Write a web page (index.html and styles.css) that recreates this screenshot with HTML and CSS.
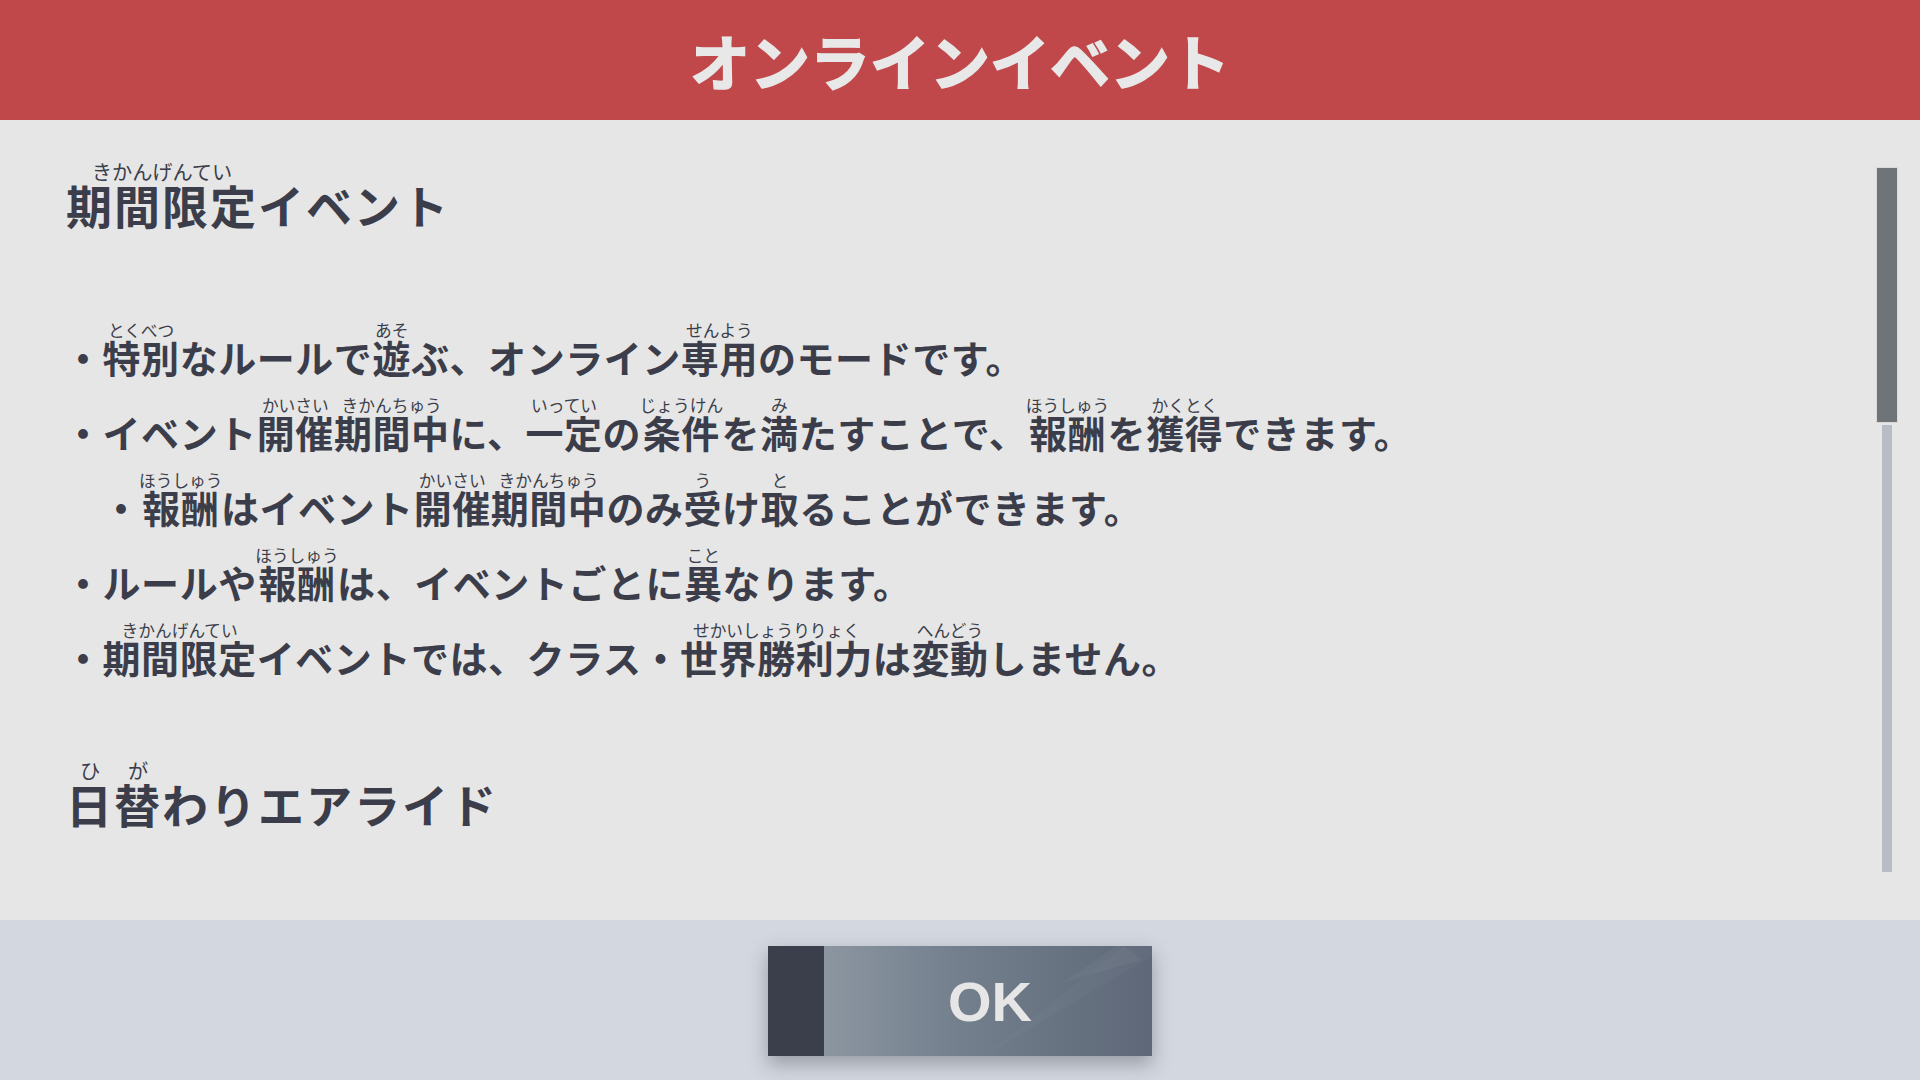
FILE: index.html
```html
<!DOCTYPE html>
<html lang="ja">
<head>
    <meta charset="UTF-8">
    <meta name="viewport" content="width=device-width, initial-scale=1.0">
    <title>オンラインイベント</title>
    <link rel="stylesheet" href="styles.css">
</head>
<body>

    <header class="title-bar">
        <h1>オンラインイベント</h1>
    </header>

    <main class="panel">
        <div class="content">
            <h2 class="section-title"><ruby>期間限定<rt>きかんげんてい</rt></ruby>イベント</h2>

            <ul class="notes">
                <li>・<ruby>特別<rt>とくべつ</rt></ruby>なルールで<ruby>遊<rt>あそ</rt></ruby>ぶ、オンライン<ruby>専用<rt>せんよう</rt></ruby>のモードです。</li>
                <li>・イベント<ruby>開催<rt>かいさい</rt></ruby><ruby>期間中<rt>きかんちゅう</rt></ruby>に、<ruby>一定<rt>いってい</rt></ruby>の<ruby>条件<rt>じょうけん</rt></ruby>を<ruby>満<rt>み</rt></ruby>たすことで、<ruby>報酬<rt>ほうしゅう</rt></ruby>を<ruby>獲得<rt>かくとく</rt></ruby>できます。</li>
                <li class="sub">・<ruby>報酬<rt>ほうしゅう</rt></ruby>はイベント<ruby>開催<rt>かいさい</rt></ruby><ruby>期間中<rt>きかんちゅう</rt></ruby>のみ<ruby>受<rt>う</rt></ruby>け<ruby>取<rt>と</rt></ruby>ることができます。</li>
                <li>・ルールや<ruby>報酬<rt>ほうしゅう</rt></ruby>は、イベントごとに<ruby>異<rt>こと</rt></ruby>なります。</li>
                <li>・<ruby>期間限定<rt>きかんげんてい</rt></ruby>イベントでは、クラス・<ruby>世界勝利力<rt>せかいしょうりりょく</rt></ruby>は<ruby>変動<rt>へんどう</rt></ruby>しません。</li>
            </ul>

            <h2 class="section-title"><ruby>日<rt>ひ</rt></ruby><ruby>替<rt>が</rt></ruby>わりエアライド</h2>
        </div>

        <!-- スクロールバー -->
        <div class="scrollbar">
            <div class="thumb"></div>
            <div class="track"></div>
        </div>
    </main>

    <footer class="footer">
        <button class="ok-btn">
            <span class="ok-edge"></span>
            <span class="ok-label">OK</span>
            <svg class="ok-shine" width="328" height="110" viewBox="0 0 328 110">
                <polygon points="160,110 328,10 328,0 300,0" fill="#ffffff" fill-opacity="0.025"/>
                <polygon points="240,36 318,14 300,0 292,0" fill="#ffffff" fill-opacity="0.035"/>
            </svg>
        </button>
    </footer>

</body>
</html>
```

FILE: styles.css
```css
body {
    margin: 0;
    width: 1920px;
    height: 1080px;
    overflow: hidden;
    font-family: "Noto Sans CJK JP", "Noto Sans", sans-serif;
    color: #3b3e4a;
    background-color: #e6e6e6;
}

/* Üst başlık */
.title-bar {
    height: 120px;
    background-color: #c0474a;
}

.title-bar h1 {
    margin: 0;
    font-size: 60px;
    line-height: 120px;
    font-weight: 700;
    text-align: center;
    color: #e8e8e8;
    -webkit-text-stroke: 1.5px #e8e8e8; /* daha kalın görünsün */
}

.panel {
    height: 800px;
    display: flex;
    overflow: hidden;
    background-color: #e6e6e6;
}

.content {
    flex: 1;
    padding: 42px 0 0 66px;
}

.section-title {
    margin: 0;
    font-size: 46px;
    line-height: 70px;
    font-weight: 700;
    letter-spacing: 2px;
}

ruby {
    ruby-align: center;
}

rt {
    font-size: 0.44em;
    font-weight: 400;
    line-height: 1;
    letter-spacing: 0;
}

.notes {
    list-style: none;
    margin: 80px 0 67px -2px;
    padding: 0;
    font-size: 38px;
    line-height: 75px;
    font-weight: 700;
    letter-spacing: 0.55px;
}

.notes li {
    height: 75px;
    white-space: nowrap;
}

.notes .sub {
    padding-left: 1em;
}

/* Kaydırma çubuğu */
.scrollbar {
    width: 20px;
    margin: 48px 23px 0 0;
    display: flex;
    flex-direction: column;
    align-items: center;
}

.thumb {
    width: 20px;
    height: 254px;
    background-color: #6f7479;
    box-shadow: 0 0 0 1px #dcd8d8;
}

.track {
    width: 10px;
    height: 447px;
    margin-top: 3px;
    background-color: #b8bcc4;
}

.footer {
    height: 160px;
    background-color: #d3d7df;
    display: flex;
    justify-content: center;
    padding-top: 26px;
    box-sizing: border-box;
}

.ok-btn {
    position: relative;
    width: 384px;
    height: 110px;
    padding: 0;
    border: none;
    display: flex;
    background: linear-gradient(90deg, #8b96a1 14.6%, #737f8d 50%, #5e6878 100%);
    box-shadow: 0 8px 18px rgba(40, 45, 60, 0.35);
    cursor: pointer;
}

.ok-edge {
    width: 56px;
    background-color: #3b3f4b;
}

.ok-label {
    flex: 1;
    display: flex;
    justify-content: center;
    align-items: center;
    font-family: "Liberation Sans", Arial, sans-serif;
    font-size: 56px;
    font-weight: 700;
    color: #e6e6e6;
    padding-left: 4px;
}

.ok-shine {
    position: absolute;
    top: 0;
    left: 56px;
}
```
